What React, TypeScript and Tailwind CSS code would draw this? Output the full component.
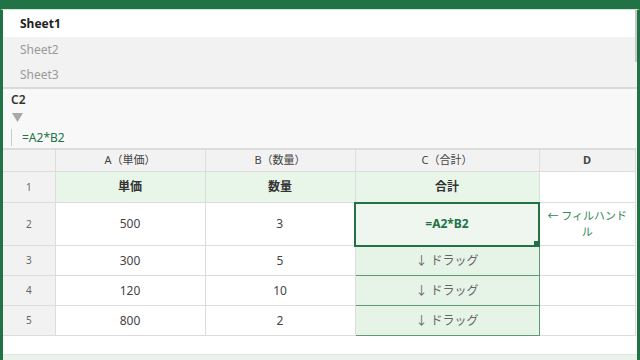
import React from "react";

const font = { fontFamily: '"Noto Sans","Noto Sans CJK JP",sans-serif' };

export default function App() {
  const rows = [
    { n: "2", a: "500", b: "3" },
    { n: "3", a: "300", b: "5" },
    { n: "4", a: "120", b: "10" },
    { n: "5", a: "800", b: "2" },
  ];
  return (
    <div style={font} className="w-[640px] h-[360px] overflow-hidden bg-white flex flex-col">
      <div className="h-[9px] bg-[#217346] shrink-0" />
      <div className="flex-1 flex flex-col border-x-[3px] border-[#217346] border-t border-t-[#cfe8d6] min-h-0">
        {/* sheet tabs */}
        <div className="relative shrink-0">
          <div className="h-[27px] bg-white flex items-center pl-[17px] text-[12px] font-bold text-[#222]">Sheet1</div>
          <div className="h-[25px] bg-[#f2f2f2] flex items-center pl-[17px] text-[12px] text-[#9a9a9a]">Sheet2</div>
          <div className="h-[25px] bg-[#f2f2f2] flex items-center pl-[17px] text-[12px] text-[#9a9a9a]">Sheet3</div>
          <div className="absolute right-0 top-0 w-[2px] h-[52px] bg-[#c8c8c8]" />
        </div>
        {/* formula area */}
        <div className="shrink-0 h-[62px] bg-[#f8f8f8] border-t-2 border-[#dadada] border-b border-b-[#dddddd] pl-[8px] pt-[2px]">
          <div className="text-[12px] font-semibold text-[#333] leading-[18px]">C2</div>
          <div className="h-[16px] flex items-center pl-[1px]">
            <svg width="11" height="9" viewBox="0 0 11 9">
              <path d="M0 0 L11 0 L5.5 9 Z" fill="#a8a8a8" />
            </svg>
          </div>
          <div className="mt-[4px] border-l border-[#cccccc] pl-[10px] text-[12px] text-[#217346] leading-[17px]">=A2*B2</div>
        </div>
        {/* grid */}
        <table className="table-fixed border-collapse w-[632px] text-[12px] text-[#444] shrink-0">
          <colgroup>
            <col className="w-[52px]" />
            <col className="w-[150px]" />
            <col className="w-[150px]" />
            <col className="w-[184px]" />
            <col className="w-[96px]" />
          </colgroup>
          <thead>
            <tr className="h-[22px] bg-[#f2f2f2] text-[11px] text-[#444]">
              <th className="border border-[#dcdcdc] border-l-0 font-normal"></th>
              <th className="border border-[#dcdcdc] font-normal">A（単価）</th>
              <th className="border border-[#dcdcdc] font-normal">B（数量）</th>
              <th className="border border-[#dcdcdc] font-normal">C（合計）</th>
              <th className="border border-[#dcdcdc] font-bold">D</th>
            </tr>
          </thead>
          <tbody>
            <tr className="h-[31px]">
              <td className="border border-[#dcdcdc] border-l-0 bg-[#f2f2f2] text-center text-[10px] text-[#666]">1</td>
              <td className="border border-[#dcdcdc] bg-[#e8f5e9] text-center font-bold text-[#333]">単価</td>
              <td className="border border-[#dcdcdc] bg-[#e8f5e9] text-center font-bold text-[#333]">数量</td>
              <td className="border border-[#dcdcdc] bg-[#e8f5e9] text-center font-bold text-[#333]">合計</td>
              <td className="border border-[#dcdcdc] bg-white"></td>
            </tr>
            {rows.map((r, i) => (
              <tr key={r.n} className={i === 0 ? "h-[43px]" : "h-[30px]"}>
                <td className="border border-[#dcdcdc] border-l-0 bg-[#f2f2f2] text-center text-[10px] text-[#666]">{r.n}</td>
                <td className="border border-[#dcdcdc] text-center">{r.a}</td>
                <td className="border border-[#dcdcdc] text-center">{r.b}</td>
                {i === 0 ? (
                  <td className="relative border-2 border-[#217346] bg-[#eef6ef] text-center font-bold text-[#217346]">
                    =A2*B2
                    <span className="absolute right-[-2px] bottom-[-2px] w-[6px] h-[6px] bg-[#217346]" />
                  </td>
                ) : (
                  <td className="border border-[#5d9a6f] bg-[#e6f4e7] text-center text-[#666]">↓ ドラッグ</td>
                )}
                <td className="border border-[#dcdcdc] text-center text-[11px] text-[#2f8557] leading-[16px] px-1">
                  {i === 0 ? "← フィルハンドル" : ""}
                </td>
              </tr>
            ))}
          </tbody>
        </table>
        <div className="flex-1" />
        <div className="h-[6px] bg-[#e9f3ec] border-t border-[#dbe9df] shrink-0" />
      </div>
    </div>
  );
}
